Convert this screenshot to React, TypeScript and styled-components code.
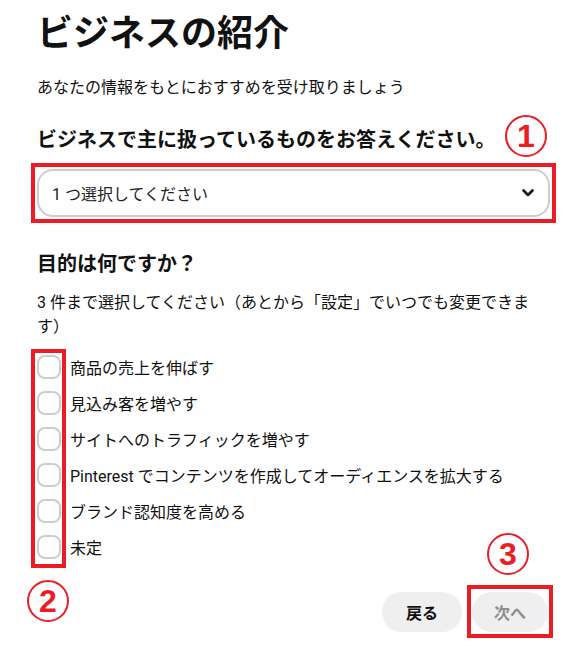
import React from "react";
import styled, { createGlobalStyle } from "styled-components";

const goals = [
  "商品の売上を伸ばす",
  "見込み客を増やす",
  "サイトへのトラフィックを増やす",
  "Pinterest でコンテンツを作成してオーディエンスを拡大する",
  "ブランド認知度を高める",
  "未定",
];

export default function App() {
  return (
    <Page>
      <GlobalStyle />
      <Title>ビジネスの紹介</Title>
      <Lead>あなたの情報をもとにおすすめを受け取りましょう</Lead>

      <Question>ビジネスで主に扱っているものをお答えください。</Question>
      <SelectFrame>
        <Badge $top={-52} $right={5}>1</Badge>
        <Select type="button">
          <span>1 つ選択してください</span>
          <svg width="12" height="8" viewBox="0 0 12 8" fill="none">
            <path d="M1.5 1.5 6 6l4.5-4.5" stroke="#111" strokeWidth="2.6" strokeLinecap="round" strokeLinejoin="round" />
          </svg>
        </Select>
      </SelectFrame>

      <Question $spaced>目的は何ですか？</Question>
      <Hint>3 件まで選択してください（あとから「設定」でいつでも変更できます）</Hint>

      <GoalList>
        <CheckFrame />
        <Badge $top={231} $left={-10}>2</Badge>
        {goals.map((goal) => (
          <GoalRow key={goal}>
            <Check type="checkbox" />
            <span>{goal}</span>
          </GoalRow>
        ))}
      </GoalList>

      <Footer>
        <Button type="button">戻る</Button>
        <NextFrame>
          <Badge $top={-56} $left={16}>3</Badge>
          <Button type="button" disabled>
            次へ
          </Button>
        </NextFrame>
      </Footer>
    </Page>
  );
}

// --- Styled Components ---
const GlobalStyle = createGlobalStyle`
  body {
    margin: 0;
    background: #fff;
    color: #111;
    font-family: Roboto, "Noto Sans CJK JP", sans-serif;
  }
`;

const RED = "#ec1c24";

const Page = styled.div`
  width: 513px;
  padding: 12px 34px 0 37px;
`;

const Title = styled.h1`
  margin: 0;
  font-size: 36px;
  line-height: 44px;
  font-weight: 700;
`;

const Lead = styled.p`
  margin: 20px 0 0;
  font-size: 16px;
  line-height: 24px;
`;

const Question = styled.h2<{ $spaced?: boolean }>`
  margin: ${(p) => (p.$spaced ? "27px" : "26px")} 0 0;
  font-size: 20px;
  line-height: 28px;
  font-weight: 700;
`;

/* red annotation frames drawn round the marked parts */
const SelectFrame = styled.div`
  position: relative;
  margin: 9px -6px 0;
  padding: 2px;
  border: 4px solid ${RED};
`;

const Select = styled.button`
  display: flex;
  align-items: center;
  justify-content: space-between;
  width: 100%;
  height: 48px;
  padding: 0 14px 0 13px;
  border: 2px solid #cdcdcd;
  border-radius: 16px;
  background: #fff;
  color: #222;
  font: inherit;
  font-size: 16px;
`;

const Badge = styled.div<{ $top: number; $left?: number; $right?: number }>`
  position: absolute;
  top: ${(p) => p.$top}px;
  ${(p) => (p.$left !== undefined ? `left: ${p.$left}px;` : "")}
  ${(p) => (p.$right !== undefined ? `right: ${p.$right}px;` : "")}
  width: 42px;
  height: 42px;
  box-sizing: border-box;
  border: 2px solid ${RED};
  border-radius: 50%;
  display: flex;
  align-items: center;
  justify-content: center;
  color: ${RED};
  font-family: "Liberation Sans", Arial, sans-serif;
  font-size: 32px;
  font-weight: 700;
  line-height: 1;
  z-index: 2;
`;

const Hint = styled.p`
  margin: 13px 0 0;
  font-size: 16px;
  line-height: 24px;
`;

const GoalList = styled.div`
  position: relative;
  margin-top: 10px;
`;

const CheckFrame = styled.div`
  position: absolute;
  top: 0;
  left: -6px;
  width: 35px;
  height: 219px;
  box-sizing: border-box;
  border: 4px solid ${RED};
  pointer-events: none;
`;

const GoalRow = styled.label`
  display: flex;
  align-items: center;
  gap: 9px;
  height: 36px;
  font-size: 16px;
`;

const Check = styled.input`
  appearance: none;
  margin: 0;
  width: 24px;
  height: 24px;
  box-sizing: border-box;
  border: 2px solid #cdcdcd;
  border-radius: 8px;
  background: #fff;
  flex-shrink: 0;
`;

const Footer = styled.div`
  display: flex;
  justify-content: flex-end;
  align-items: center;
  gap: 5px;
  margin: 20px -3px 0 0;
`;

const NextFrame = styled.div`
  position: relative;
  display: flex;
  padding: 3px 1px 2px;
  border: 4px solid ${RED};
`;

const Button = styled.button`
  height: 40px;
  min-width: 76px;
  padding: 0 22px;
  border: none;
  border-radius: 20px;
  background: #efefef;
  color: #111;
  font: inherit;
  font-size: 16px;
  font-weight: 700;

  &:first-child {
    min-width: 80px;
  }

  &:disabled {
    color: #8e8e8e;
  }
`;
